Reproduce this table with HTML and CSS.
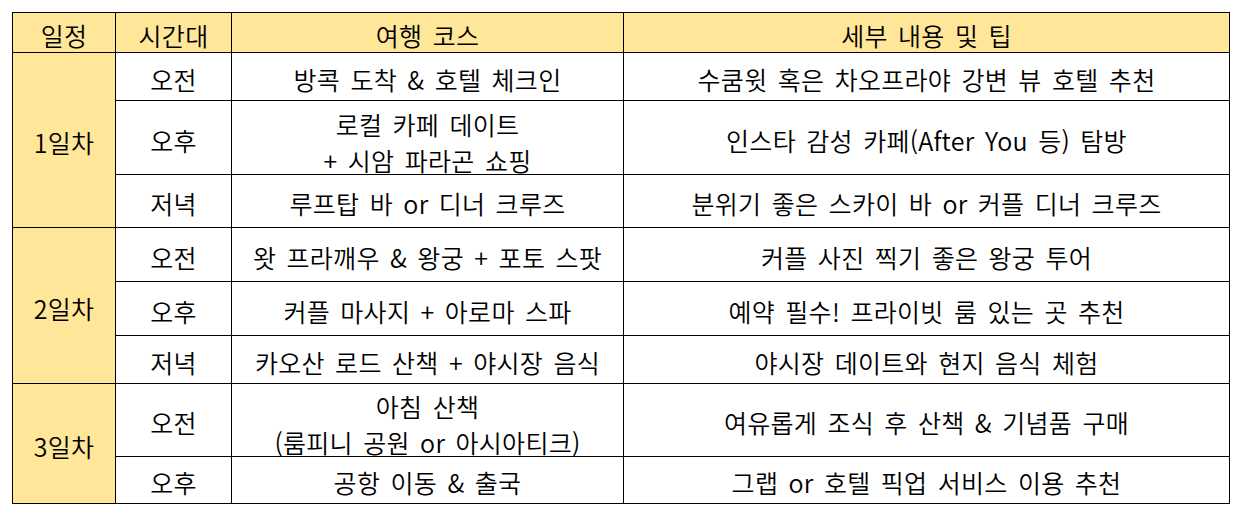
FILE: index.html
```html
<!DOCTYPE html>
<html lang="ko">
<head>
<meta charset="utf-8">
<title>여행 코스</title>
<link rel="stylesheet" href="styles.css">
</head>
<body>
<div class="sheet">
  <div class="cell head">일정</div>
  <div class="cell head">시간대</div>
  <div class="cell head">여행 코스</div>
  <div class="cell head">세부 내용 및 팁</div>

  <div class="cell day span3">1일차</div>
  <div class="cell">오전</div>
  <div class="cell">방콕 도착 &amp; 호텔 체크인</div>
  <div class="cell">수쿰윗 혹은 차오프라야 강변 뷰 호텔 추천</div>
  <div class="cell">오후</div>
  <div class="cell two">로컬 카페 데이트<br>+ 시암 파라곤 쇼핑</div>
  <div class="cell">인스타 감성 카페(After You 등) 탐방</div>
  <div class="cell">저녁</div>
  <div class="cell">루프탑 바 or 디너 크루즈</div>
  <div class="cell">분위기 좋은 스카이 바 or 커플 디너 크루즈</div>

  <div class="cell day span3">2일차</div>
  <div class="cell">오전</div>
  <div class="cell">왓 프라깨우 &amp; 왕궁 + 포토 스팟</div>
  <div class="cell">커플 사진 찍기 좋은 왕궁 투어</div>
  <div class="cell">오후</div>
  <div class="cell">커플 마사지 + 아로마 스파</div>
  <div class="cell">예약 필수! 프라이빗 룸 있는 곳 추천</div>
  <div class="cell">저녁</div>
  <div class="cell">카오산 로드 산책 + 야시장 음식</div>
  <div class="cell">야시장 데이트와 현지 음식 체험</div>

  <div class="cell day span2">3일차</div>
  <div class="cell">오전</div>
  <div class="cell two">아침 산책<br>(룸피니 공원 or 아시아티크)</div>
  <div class="cell">여유롭게 조식 후 산책 &amp; 기념품 구매</div>
  <div class="cell">오후</div>
  <div class="cell">공항 이동 &amp; 출국</div>
  <div class="cell">그랩 or 호텔 픽업 서비스 이용 추천</div>
</div>
</body>
</html>
```

FILE: styles.css
```css
html, body {
  margin: 0;
  padding: 0;
  background: #ffffff;
}

body {
  padding: 12px;
  font-family: "Noto Sans CJK KR", "Noto Sans", sans-serif;
  font-size: 25px;
  font-weight: 350;
  letter-spacing: 0.3px;
  word-spacing: 3px;
  color: #000000;
}

.sheet {
  display: grid;
  width: max-content;
  grid-template-columns: 102px 115px 391px 605px;
  grid-template-rows: 39px 47px 73px 52px 53px 53px 47px 72px 46px;
  gap: 1px;
  padding: 1px;
  background: #000000;
}

.cell {
  display: flex;
  align-items: center;
  justify-content: center;
  text-align: center;
  background: #ffffff;
  line-height: 30px;
  padding-top: 4px;
  box-sizing: border-box;
  white-space: nowrap;
}

.cell.two {
  line-height: 36px;
  padding-top: 8px;
}

.head,
.day {
  background: #ffe699;
}

.span3 {
  grid-row: span 3;
}

.span2 {
  grid-row: span 2;
}
```
